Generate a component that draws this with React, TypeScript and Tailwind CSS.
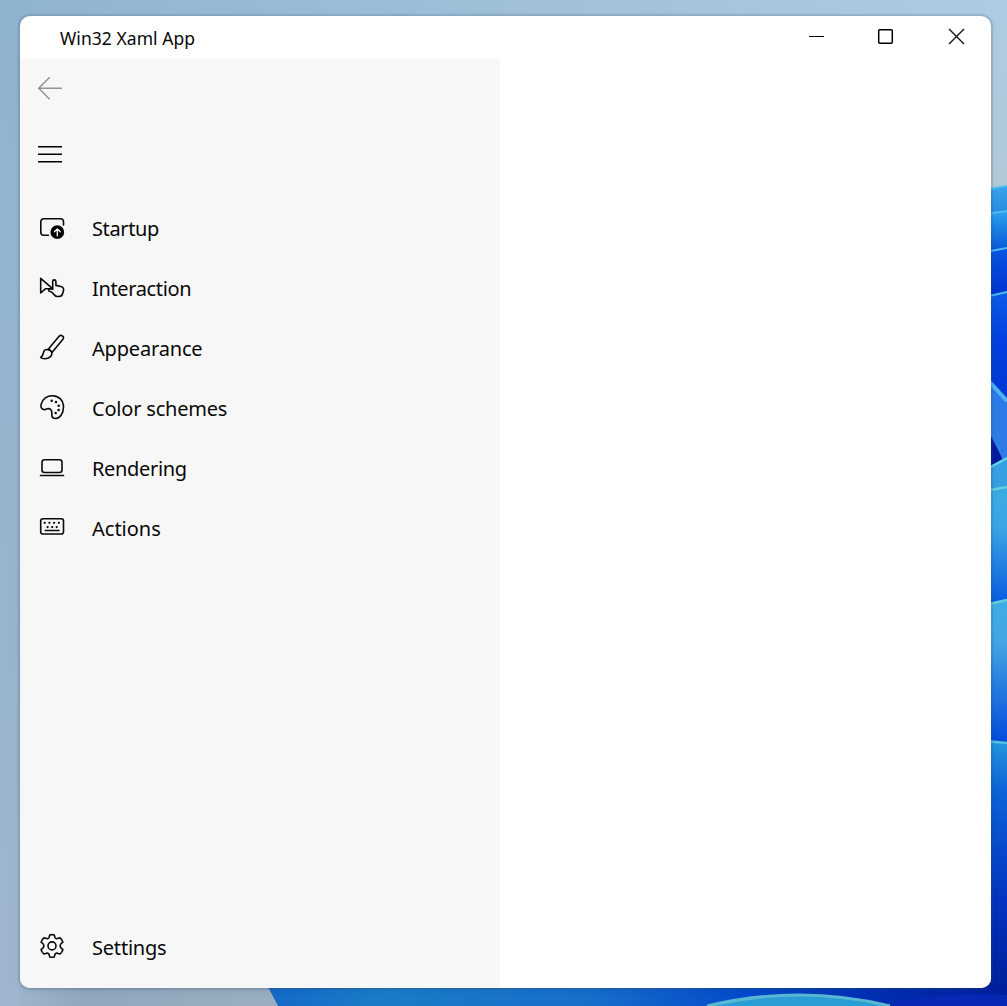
import type { ReactNode } from "react";

function Icon({ children }: { children: ReactNode }) {
  return (
    <svg
      className="h-7 w-7 shrink-0"
      viewBox="0 0 28 28"
      fill="none"
      stroke="#0a0a0a"
      strokeWidth="1.6"
      strokeLinecap="round"
      strokeLinejoin="round"
    >
      {children}
    </svg>
  );
}

const startup = (
  <Icon>
    <path d="M10.5 21.2H5.8a3 3 0 0 1-3-3V7.7a3 3 0 0 1 3-3h16.7a3 3 0 0 1 3 3v3.3" />
    <circle cx="19.3" cy="18.2" r="6.1" fill="#000" />
    <path d="M19.3 21.8v-6.6M16.4 17.8l2.9-2.9 2.9 2.9" stroke="#fff" strokeWidth="1.3" />
  </Icon>
);

const interaction = (
  <Icon>
    <path d="M13.4 13.7 2.7 4.3V19l4.900-4.300H13" />
    <path d="M14.700 15.300V7.400c0-2.100 3.200-2.100 3.200 0v4l5 1.100c2.100.5 3.100 2 2.600 4l-.8 3c-.5 1.900-1.800 3-3.700 3h-1.600c-1.300 0-2.200-.5-2.900-1.500-1.600-2.300-3.300-3.500-5.800-4.200-.2-2.100 1.700-2.600 4-1.500Z" />
  </Icon>
);

const appearance = (
  <Icon>
    <path d="M10 15.6 20.9 2.4c2-2.3 5.7-.1 4.2 2.6L13.8 18.7M10 15.6c2 .2 3.4 1.4 3.8 3.1M10 15.6c-2.6-.6-4.3 1.1-4.7 3.5-.3 2-1.1 3.3-2.6 4.4 1.4 1.5 6.7 2 9.5-.6 1.4-1.2 1.9-2.7 1.6-4.2" />
  </Icon>
);

const colors = (
  <Icon>
    <path d="M3 10.600C4.300 4.800 9.200 1.500 14.800 1.700c6.300.3 10.700 4.900 10.700 11.300 0 6.800-3.800 11.500-8 11.500-2.700 0-3.700-1.500-3.700-3.800v-2.500c0-2.600-1.900-4.100-4.400-3.400l-2.100.6c-2.900.8-5-1.600-4.300-4.800Z" />
    <g fill="#0a0a0a" stroke="none">
      <circle cx="13.700" cy="6.800" r="1.250" />
      <circle cx="18" cy="8.100" r="1.250" />
      <circle cx="20.700" cy="11.700" r="1.250" />
      <circle cx="20.600" cy="16.100" r="1.250" />
      <circle cx="17.700" cy="19" r="1.250" />
    </g>
  </Icon>
);

const rendering = (
  <Icon>
    <rect x="4" y="5.700" width="20" height="12.800" rx="2.500" />
    <path d="M2.500 21.500h23" />
  </Icon>
);

const actions = (
  <Icon>
    <rect x="2.700" y="4.700" width="22.800" height="15.300" rx="2.300" />
    <path d="M7.300 16.500H21" />
    <g fill="#0a0a0a" stroke="none">
      <circle cx="6.700" cy="8.800" r="1.150" />
      <circle cx="11.400" cy="8.800" r="1.150" />
      <circle cx="16.100" cy="8.800" r="1.150" />
      <circle cx="20.900" cy="8.800" r="1.150" />
      <circle cx="9.600" cy="13.100" r="1.150" />
      <circle cx="14.200" cy="13.100" r="1.150" />
      <circle cx="18.700" cy="13.100" r="1.150" />
    </g>
  </Icon>
);

const settings = (
  <Icon>
    <circle cx="14" cy="12.900" r="4" />
    <path d="M11.700 1.900Q14 1.300 16.300 1.900L16.900 4.500Q17.700 6.100 19.400 5.600L22.100 4.800Q24.200 6.700 24.900 9.100L22.700 11Q21.600 12.900 22.700 14.700L24.900 16.700Q24.200 19.100 22.100 21L19.400 20.200Q17.700 19.700 16.900 21.300L16.300 23.900Q14 24.500 11.700 23.900L11.100 21.300Q10.300 19.700 8.600 20.200L5.900 21Q3.800 19.100 3.100 16.700L5.300 14.700Q6.400 12.900 5.300 11L3.100 9.100Q3.800 6.700 5.900 4.800L8.600 5.600Q10.300 6.100 11.100 4.500Z" />
  </Icon>
);

function NavItem({ icon, label, spacing }: { icon: ReactNode; label: string; spacing: string }) {
  return (
    <button className="flex h-[60px] w-full items-center pl-[18px] text-left">
      {icon}
      <span className={"ml-[26px] pt-[2px] text-[20px] leading-7 whitespace-nowrap " + spacing}>{label}</span>
    </button>
  );
}

const items = [
  { label: "Startup", icon: startup, spacing: "tracking-[-0.38px]" },
  { label: "Interaction", icon: interaction, spacing: "tracking-[-0.35px]" },
  { label: "Appearance", icon: appearance, spacing: "tracking-[-0.18px]" },
  { label: "Color schemes", icon: colors, spacing: "tracking-[-0.2px]" },
  { label: "Rendering", icon: rendering, spacing: "tracking-[-0.34px]" },
  { label: "Actions", icon: actions, spacing: "tracking-[0px]" },
];

function Wallpaper() {
  const ribbons = [
    { d: "M985 190L1007 186V460H985Z", fill: "url(#r1)", edge: "M985 190L1007 186" },
    { d: "M985 214L1007 211V460H985Z", fill: "url(#r2)", edge: "M985 214L1007 211" },
    { d: "M985 252L1007 248V460H985Z", fill: "url(#r3)", edge: "M985 252L1007 248" },
    { d: "M985 297L1007 292V470H985Z", fill: "url(#r4)", edge: "M985 297L1007 292" },
  ];
  return (
    <svg className="absolute inset-0 h-full w-full" viewBox="0 0 1007 1006" aria-hidden="true">
      <defs>
        <linearGradient id="sky" x1="0" y1="0" x2="1" y2="0">
          <stop offset="0" stopColor="#8fb4d0" />
          <stop offset="1" stopColor="#afcbe1" />
        </linearGradient>
        <linearGradient id="left" x1="0" y1="0" x2="0" y2="1">
          <stop offset="0" stopColor="#8fb4d0" />
          <stop offset="1" stopColor="#9fb5cd" />
        </linearGradient>
        <linearGradient id="right" x1="0" y1="0" x2="0" y2="1">
          <stop offset="0" stopColor="#afcbe1" />
          <stop offset="1" stopColor="#b1c9d6" />
        </linearGradient>
        <linearGradient id="r1" gradientUnits="userSpaceOnUse" x1="0" y1="185" x2="0" y2="213">
          <stop stopColor="#3ca5eb" /><stop offset="1" stopColor="#258ce0" />
        </linearGradient>
        <linearGradient id="r2" gradientUnits="userSpaceOnUse" x1="0" y1="212" x2="0" y2="250">
          <stop stopColor="#2ba0ed" /><stop offset="1" stopColor="#0758d8" />
        </linearGradient>
        <linearGradient id="r3" gradientUnits="userSpaceOnUse" x1="0" y1="250" x2="0" y2="293">
          <stop stopColor="#0755e2" /><stop offset="1" stopColor="#0033d2" />
        </linearGradient>
        <linearGradient id="r4" gradientUnits="userSpaceOnUse" x1="0" y1="294" x2="0" y2="410">
          <stop stopColor="#0b5be6" /><stop offset=".4" stopColor="#0340e0" /><stop offset="1" stopColor="#0036cf" />
        </linearGradient>
        <linearGradient id="r5" gradientUnits="userSpaceOnUse" x1="0" y1="487" x2="0" y2="602">
          <stop stopColor="#3aabe4" /><stop offset=".35" stopColor="#3aa6e5" /><stop offset="1" stopColor="#0a5de0" />
        </linearGradient>
        <linearGradient id="r6" gradientUnits="userSpaceOnUse" x1="0" y1="601" x2="0" y2="742">
          <stop stopColor="#3dade4" /><stop offset=".3" stopColor="#43a5e4" /><stop offset="1" stopColor="#034bdc" />
        </linearGradient>
        <linearGradient id="r7" gradientUnits="userSpaceOnUse" x1="0" y1="741" x2="0" y2="990">
          <stop stopColor="#2496de" /><stop offset=".2" stopColor="#0b63d8" /><stop offset=".65" stopColor="#0332c0" /><stop offset="1" stopColor="#001f99" />
        </linearGradient>
        <linearGradient id="bottom" gradientUnits="userSpaceOnUse" x1="268" y1="0" x2="1007" y2="0">
          <stop stopColor="#1469c9" /><stop offset=".15" stopColor="#197cc8" /><stop offset=".43" stopColor="#176fca" />
          <stop offset=".65" stopColor="#0449cb" /><stop offset=".82" stopColor="#022eb2" /><stop offset="1" stopColor="#001f9c" />
        </linearGradient>
        <linearGradient id="haze" gradientUnits="userSpaceOnUse" x1="0" y1="0" x2="280" y2="0">
          <stop stopColor="#a0b8d0" /><stop offset=".3" stopColor="#91a7bb" /><stop offset="1" stopColor="#9aaec0" />
        </linearGradient>
      </defs>
      <path d="M0 0H1007V1006H0Z" fill="url(#sky)" />
      <path d="M0 16H40V1006H0Z" fill="url(#left)" />
      <path d="M985 16H1007V200H985Z" fill="url(#right)" />
      <path d="M20 980H290V1006H20Z" fill="url(#haze)" />
      {ribbons.map((r) => (
        <g key={r.d}>
          <path d={r.d} fill={r.fill} />
          <path d={r.edge} stroke="#4bbcf0" strokeWidth="2" />
        </g>
      ))}
      <path d="M985 376L1007 400V480H985Z" fill="#2d7be6" />
      <path d="M985 377L1007 401" stroke="#4cb3ee" strokeWidth="4" />
      <path d="M985 424L1004 462L985 475Z" fill="#001ba0" />
      <path d="M985 469L1007 457V500H985Z" fill="#36a0e2" />
      <path d="M985 470L1007 458" stroke="#5fd0e6" strokeWidth="2.500" />
      <path d="M985 490L1007 486V610H985Z" fill="url(#r5)" />
      <path d="M985 491L1007 487" stroke="#60d0df" strokeWidth="2.500" />
      <path d="M985 604L1007 599V750H985Z" fill="url(#r6)" />
      <path d="M985 605L1007 600" stroke="#60cfdf" strokeWidth="2.500" />
      <path d="M985 741L1007 743V1006H985Z" fill="url(#r7)" />
      <path d="M985 741L1007 743" stroke="#50c2e4" strokeWidth="2.500" />
      <path d="M267 985L278 1006H1007V985Z" fill="url(#bottom)" />
      <path d="M880 1006Q930 992 1007 995V1006Z" fill="#0728b5" />
      <path d="M707 1006Q800 984 890 1006Z" fill="#2b9dd5" />
      <path d="M707 1006Q800 984 890 1006" stroke="#58b8d3" strokeWidth="3" fill="none" />
    </svg>
  );
}

export default function App() {
  return (
    <div className="relative h-[1006px] w-full overflow-hidden pt-4 pl-5 font-['Noto_Sans','Open_Sans',sans-serif] text-[#080808]">
      <Wallpaper />
      <main className="relative flex h-[972px] w-[971px] flex-col overflow-hidden rounded-[10px] bg-white shadow-[0_0_0_2px_rgba(60,80,110,0.16),0_2px_6px_rgba(20,40,80,0.12)]">
        <header className="flex h-[43px] shrink-0 items-center justify-between pl-10">
          <h1 className="text-[17.5px] leading-6 tracking-[0.05px]">Win32 Xaml App</h1>
          <div className="flex h-full items-start">
            <button aria-label="Minimize" className="h-[42px] w-[70px]">
              <svg className="h-[42px] w-[70px]" viewBox="0 0 70 42" stroke="#000" strokeWidth="1">
                <path d="M28 20.500H43" />
              </svg>
            </button>
            <button aria-label="Maximize" className="h-[42px] w-[70px]">
              <svg className="h-[42px] w-[70px]" viewBox="0 0 70 42" fill="none" stroke="#000" strokeWidth="1.500">
                <rect x="27.700" y="13.700" width="13.600" height="13.600" rx="1" />
              </svg>
            </button>
            <button aria-label="Close" className="h-[42px] w-[70px]">
              <svg className="h-[42px] w-[70px]" viewBox="0 0 70 42" stroke="#111" strokeWidth="1.400">
                <path d="M28 13L43 28M43 13L28 28" />
              </svg>
            </button>
          </div>
        </header>
        <div className="flex min-h-0 flex-1">
          <aside className="flex w-[480px] flex-col bg-[#f7f7f7]">
            <button aria-label="Back" className="flex h-[60px] w-[60px] items-center justify-center">
              <svg className="h-7 w-7" viewBox="0 0 28 28" fill="none" stroke="#949494" strokeWidth="1.500">
                <path d="M26 13.200H2.500M13.700 2.300L2.700 13.200L13.700 24.200" />
              </svg>
            </button>
            <button aria-label="Toggle navigation" className="mt-[6px] flex h-[60px] w-[60px] items-center justify-center">
              <svg className="h-7 w-7" viewBox="0 0 28 28" stroke="#000" strokeWidth="1.400">
                <path d="M2 5.700H26M2 13.300H26M2 20.700H26" />
              </svg>
            </button>
            <nav className="mt-[13px]">
              {items.map((item) => (
                <NavItem key={item.label} {...item} />
              ))}
            </nav>
            <div className="mt-auto mb-[11px]">
              <NavItem icon={settings} label="Settings" spacing="tracking-[-0.2px]" />
            </div>
          </aside>
          <section className="flex-1 bg-white" />
        </div>
      </main>
    </div>
  );
}
